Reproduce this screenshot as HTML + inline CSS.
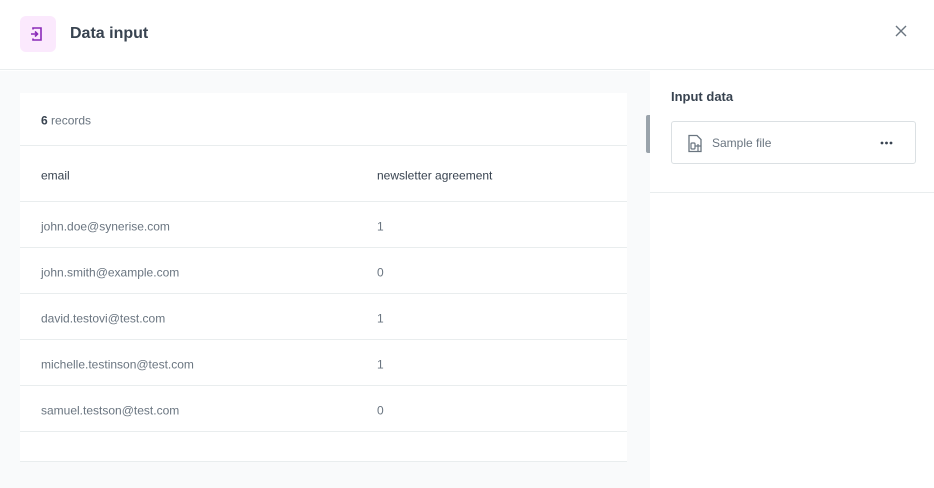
<!DOCTYPE html>
<html><head><style>
*{margin:0;padding:0;box-sizing:border-box}
body{width:934px;height:488px;overflow:hidden;font-family:"Liberation Sans",sans-serif;background:#fff;position:relative;color:#384350}
.hdr{position:absolute;left:0;top:0;width:934px;height:70px;border-bottom:1px solid #e9edee;background:#fff}
.ico{position:absolute;left:20px;top:16px;width:36px;height:36px;border-radius:6px;background:#fbe9fd}
.title{position:absolute;left:70px;top:25px;font-size:16px;font-weight:bold;color:#384350}
.close{position:absolute;left:894px;top:24px}
.left{position:absolute;left:0;top:71px;width:650px;height:417px;background:#f9fafb}
.card{position:absolute;left:20px;top:93px;width:607px;height:369px;background:#fff;border-bottom:1px solid #e9edee}
.row{position:absolute;left:0;width:607px;border-bottom:1px solid #e9edee;font-size:12px}
.row span{position:absolute;top:50%;transform:translateY(-40%)}
.c1{left:21px}.c2{left:357px}
.g{color:#6a7580}
.sb{position:absolute;left:646px;top:115px;width:4px;height:38px;background:#9aa3ab;border-radius:2px 0 0 2px}
.right{position:absolute;left:650px;top:71px;width:284px;height:122px;border-bottom:1px solid #e9edee}
.rt{position:absolute;left:21px;top:18px;font-size:13px;font-weight:bold;color:#384350}
.file{position:absolute;left:21px;top:50px;width:245px;height:43px;border:1px solid #dbe0e3;border-radius:3px}
.file .n{position:absolute;left:40px;top:14px;font-size:12px;color:#6a7580}
</style></head><body>
<div class="hdr">
<div class="ico"><svg width="36" height="36" viewBox="0 0 36 36"><path d="M13 13.5V12h8v12h-8v-1.5" fill="none" stroke="#8a2bb8" stroke-width="1.6"/><path d="M11 18h6M15 15.5l2.5 2.5-2.5 2.5" fill="none" stroke="#8a2bb8" stroke-width="1.6"/></svg></div>
<div class="title">Data input</div>
<svg class="close" width="14" height="14" viewBox="0 0 14 14"><path d="M2 2l10 10M12 2L2 12" stroke="#6a7580" stroke-width="1.4"/></svg>
</div>
<div class="left"></div>
<div class="card">
<div class="row" style="top:0;height:53px"><span class="c1" style="color:#6a7580"><b style="color:#384350">6</b> records</span></div>
<div class="row" style="top:53px;height:56px;color:#384350"><span class="c1">email</span><span class="c2">newsletter agreement</span></div>
<div class="row g" style="top:109px;height:46px"><span class="c1">john.doe@synerise.com</span><span class="c2">1</span></div>
<div class="row g" style="top:155px;height:46px"><span class="c1">john.smith@example.com</span><span class="c2">0</span></div>
<div class="row g" style="top:201px;height:46px"><span class="c1">david.testovi@test.com</span><span class="c2">1</span></div>
<div class="row g" style="top:247px;height:46px"><span class="c1">michelle.testinson@test.com</span><span class="c2">1</span></div>
<div class="row g" style="top:293px;height:46px"><span class="c1">samuel.testson@test.com</span><span class="c2">0</span></div>
</div>
<div class="sb"></div>
<div class="right">
<div class="rt">Input data</div>
<div class="file">
<svg style="position:absolute;left:14px;top:12px" width="18" height="20" viewBox="0 0 18 20"><path d="M3 1.5h8l4 4v12h-12z" fill="none" stroke="#6a7580" stroke-width="1.3"/><rect x="5" y="9" width="4" height="6" rx="1" fill="none" stroke="#6a7580" stroke-width="1.2"/><path d="M9 12h6M12 10v7" stroke="#6a7580" stroke-width="1.2"/></svg>
<span class="n">Sample file</span>
<svg style="position:absolute;left:208px;top:19px" width="13" height="4" viewBox="0 0 13 4"><circle cx="2" cy="2" r="1.4" fill="#384350"/><circle cx="6.5" cy="2" r="1.4" fill="#384350"/><circle cx="11" cy="2" r="1.4" fill="#384350"/></svg>
</div>
</div>
</body></html>
